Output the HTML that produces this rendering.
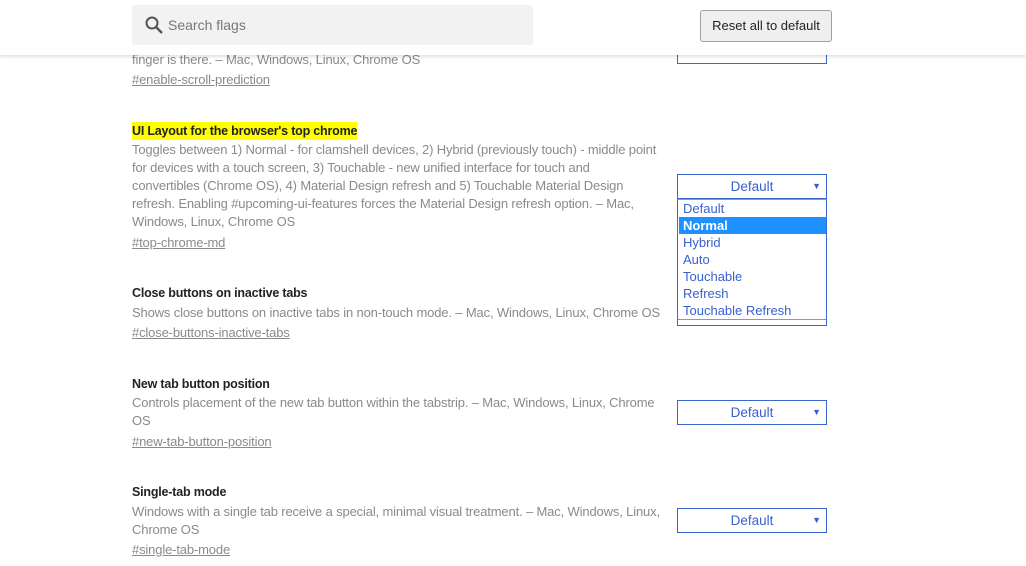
<!DOCTYPE html>
<html><head><meta charset="utf-8"><style>
*{margin:0;padding:0;box-sizing:border-box}
body{width:1026px;height:566px;overflow:hidden;background:#fff;font-family:"Liberation Sans",sans-serif;position:relative}
.a{position:absolute;white-space:nowrap;line-height:18px}
.t{font-size:12.5px;color:#222;font-weight:bold;letter-spacing:-0.2px}
.d{font-size:13px;color:#8a8a8a;letter-spacing:-0.15px}
.l{font-size:13px;color:#8a8a8a;text-decoration:underline;letter-spacing:-0.15px}
.sel{position:absolute;left:677px;width:150px;height:25px;border:1px solid #3a67d0;background:#fff;color:#3a5fd0;font-size:13.5px;text-align:center;line-height:23px}
.sel:after{content:"▼";position:absolute;right:5px;top:0;font-size:9px;color:#3a5fd0}
.hdr{position:absolute;left:0;top:0;width:1026px;height:55px;background:#fff;box-shadow:0 2px 3px rgba(0,0,0,0.12);z-index:5}
.opt{position:absolute;left:1px;width:147px;height:17px;line-height:17px;padding-left:4px;font-size:13px;color:#3a5fd0}
</style></head><body>
<div class="sel" style="top:40px;height:24px"></div>
<div class="hdr">
 <div style="position:absolute;left:132px;top:5px;width:401px;height:40px;background:#f2f2f2;border-radius:3px"></div>
 <svg style="position:absolute;left:144px;top:15px" width="20" height="20" viewBox="0 0 20 20"><circle cx="8" cy="8" r="5.5" fill="none" stroke="#555" stroke-width="2"/><path d="M12 12L18 18" stroke="#555" stroke-width="2.4"/></svg>
 <div class="a" style="left:168px;top:16px;font-size:14px;color:#777">Search flags</div>
 <div style="position:absolute;left:700px;top:10px;width:132px;height:32px;background:#efefef;border:1px solid #a0a0a0;border-radius:3px;font-size:13px;color:#222;text-align:center;line-height:30px">Reset all to default</div>
</div>
<div class="a d" style="left:132px;top:51px">finger is there. – Mac, Windows, Linux, Chrome OS</div>
<div class="a l" style="left:132px;top:71px">#enable-scroll-prediction</div>

<div class="a t" style="left:132px;top:122px;background:#ffff00">UI Layout for the browser's top chrome</div>
<div class="a d" style="left:132px;top:141px">Toggles between 1) Normal - for clamshell devices, 2) Hybrid (previously touch) - middle point</div>
<div class="a d" style="left:132px;top:159px">for devices with a touch screen, 3) Touchable - new unified interface for touch and</div>
<div class="a d" style="left:132px;top:177px">convertibles (Chrome OS), 4) Material Design refresh and 5) Touchable Material Design</div>
<div class="a d" style="left:132px;top:195px">refresh. Enabling #upcoming-ui-features forces the Material Design refresh option. – Mac,</div>
<div class="a d" style="left:132px;top:213px">Windows, Linux, Chrome OS</div>
<div class="a l" style="left:132px;top:234px">#top-chrome-md</div>

<div class="sel" style="top:174px">Default</div>
<div style="position:absolute;left:677px;top:199px;width:150px;height:127px;border:1px solid #3a67d0;border-top:1px solid #7a9ad8;background:#fff">
 <div class="opt" style="top:0">Default</div>
 <div class="opt" style="top:17px;background:#1e90ff;color:#fff;font-weight:bold">Normal</div>
 <div class="opt" style="top:34px">Hybrid</div>
 <div class="opt" style="top:51px">Auto</div>
 <div class="opt" style="top:68px">Touchable</div>
 <div class="opt" style="top:85px">Refresh</div>
 <div class="opt" style="top:102px">Touchable Refresh</div>
 <div style="position:absolute;left:0;top:119px;width:148px;border-top:1px solid #7a9ad8"></div>
</div>

<div class="a t" style="left:132px;top:284px">Close buttons on inactive tabs</div>
<div class="a d" style="left:132px;top:304px">Shows close buttons on inactive tabs in non-touch mode. – Mac, Windows, Linux, Chrome OS</div>
<div class="a l" style="left:132px;top:324px">#close-buttons-inactive-tabs</div>

<div class="a t" style="left:132px;top:375px">New tab button position</div>
<div class="a d" style="left:132px;top:394px">Controls placement of the new tab button within the tabstrip. – Mac, Windows, Linux, Chrome</div>
<div class="a d" style="left:132px;top:412px">OS</div>
<div class="a l" style="left:132px;top:433px">#new-tab-button-position</div>
<div class="sel" style="top:400px">Default</div>

<div class="a t" style="left:132px;top:483px">Single-tab mode</div>
<div class="a d" style="left:132px;top:503px">Windows with a single tab receive a special, minimal visual treatment. – Mac, Windows, Linux,</div>
<div class="a d" style="left:132px;top:521px">Chrome OS</div>
<div class="a l" style="left:132px;top:541px">#single-tab-mode</div>
<div class="sel" style="top:508px">Default</div>
</body></html>
